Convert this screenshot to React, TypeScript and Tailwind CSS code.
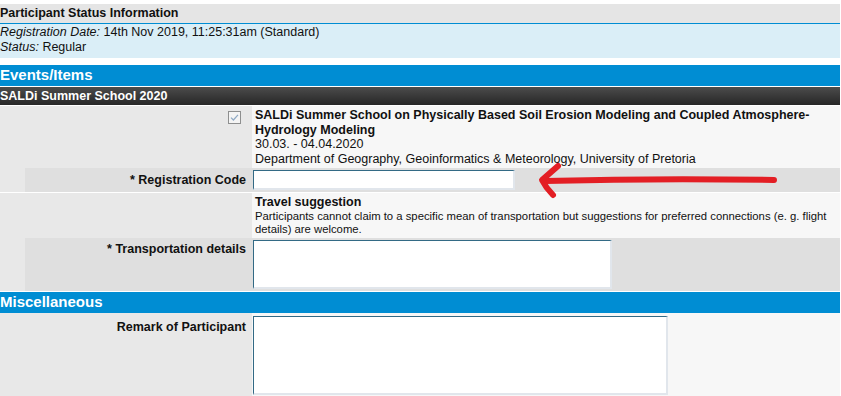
const font = "font-['Liberation_Sans',Arial,sans-serif]"

function Checkbox() {
  return (
    <span className="inline-flex w-[13px] h-[13px] border border-[#8e8f8f] bg-[#f4f4f4] items-center justify-center">
      <svg width="9" height="9" viewBox="0 0 9 9" fill="none">
        <path d="M1 4.6 L3.4 7 L8 1.8" stroke="#8fa9c4" strokeWidth="1.2" />
      </svg>
    </span>
  )
}

function Field({ w, h }: { w: number; h: number }) {
  return (
    <div
      className="bg-white border-t border-l border-t-[#336a85] border-l-[#336a85] border-r-2 border-b-2 border-r-[#e1e6ec] border-b-[#e1e6ec]"
      style={{ width: w, height: h }}
    />
  )
}

export default function App() {
  return (
    <div className={`relative w-[840px] bg-white text-[12.5px] leading-[14.5px] text-[#111] ${font}`}>
      {/* Status */}
      <div className="pt-[4px]">
        <div className="h-[20px] bg-[#e5e5e5] font-bold flex items-center border-b border-[#008dd3]">
          Participant Status Information
        </div>
        <div className="bg-[#daeef7] pt-[1px] pb-[3px] h-[34px]">
          <div>
            <i>Registration Date:</i> 14th Nov 2019, 11:25:31am (Standard)
          </div>
          <div>
            <i>Status:</i> Regular
          </div>
        </div>
      </div>

      {/* Events */}
      <div className="mt-[7px] h-[21px] bg-[#008dd3] text-white font-bold text-[15px] flex items-center">
        Events/Items
      </div>
      <div className="mt-px h-[18px] bg-gradient-to-b from-[#4c4c4c] to-[#272727] text-white font-bold flex items-center">
        SALDi Summer School 2020
      </div>

      <div className="mt-px flex h-[62px]">
        <div className="w-[252px] bg-[#e8e8e8] flex justify-end pr-[11px] pt-[5px]">
          <Checkbox />
        </div>
        <div className="flex-1 bg-[#f7f7f7] pl-[3px] pt-[2px]">
          <div className="font-bold pr-[20px]">
            SALDi Summer School on Physically Based Soil Erosion Modeling and Coupled Atmosphere-Hydrology Modeling
          </div>
          <div>30.03. - 04.04.2020</div>
          <div>Department of Geography, Geoinformatics &amp; Meteorology, University of Pretoria</div>
        </div>
      </div>

      <div className="flex h-[24px] bg-[#e8e8e8] pl-[25px]">
        <div className="w-[227px] bg-[#dfdfdf] flex items-center justify-end pr-[6px] font-bold">
          * Registration Code
        </div>
        <div className="flex-1 bg-[#dfdfdf] pl-px pt-[2px]">
          <Field w={262} h={20} />
        </div>
      </div>

      <div className="mt-px flex h-[45px]">
        <div className="w-[252px] bg-[#e8e8e8]" />
        <div className="flex-1 bg-[#f7f7f7] pl-[3px] pr-[2px] pt-[2px]">
          <div className="font-bold">Travel suggestion</div>
          <div className="text-[11.3px] leading-[13.5px]">
            Participants cannot claim to a specific mean of transportation but suggestions for preferred connections (e. g. flight details) are welcome.
          </div>
        </div>
      </div>

      <div className="flex h-[53px] bg-[#e8e8e8] pl-[25px]">
        <div className="w-[227px] bg-[#dfdfdf] flex justify-end pr-[6px] pt-[4px] font-bold">
          * Transportation details
        </div>
        <div className="flex-1 bg-[#dfdfdf] pl-px pt-[2px]">
          <Field w={359} h={49} />
        </div>
      </div>

      {/* Miscellaneous */}
      <div className="mt-px h-[21px] bg-[#008dd3] text-white font-bold text-[15px] flex items-center">
        Miscellaneous
      </div>
      <div className="flex h-[83px]">
        <div className="w-[252px] bg-[#e8e8e8] flex justify-end pr-[6px] pt-[7px] font-bold">
          Remark of Participant
        </div>
        <div className="flex-1 bg-[#f7f7f7] pl-px pt-[3px]">
          <Field w={415} h={79} />
        </div>
      </div>

      {/* annotation arrow */}
      <svg className="absolute left-0 top-0 pointer-events-none" width="840" height="396" viewBox="0 0 840 396" fill="none">
        <path d="M774 180 Q660 178 545 181" stroke="#e31e24" strokeWidth="6" strokeLinecap="round" />
        <path d="M558 166 L542 180 Q546 188 553 195" stroke="#e31e24" strokeWidth="6" strokeLinecap="round" strokeLinejoin="round" />
      </svg>
    </div>
  )
}
